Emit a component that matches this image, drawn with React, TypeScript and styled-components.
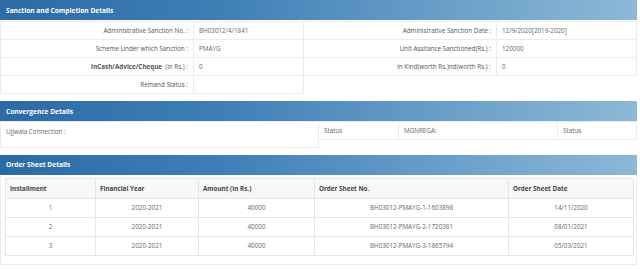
import React from "react";
import styled, { createGlobalStyle } from "styled-components";

const Global = createGlobalStyle`
  html, body { margin: 0; padding: 0; background: #fff; }
  body { font-family: "Open Sans", "Liberation Sans", sans-serif; color: #555; }
`;

const Page = styled.div`
  width: 637px;
  display: flex;
  flex-direction: column;
`;

const Panel = styled.section<{ $gap?: number }>`
  display: flex;
  flex-direction: column;
  margin-bottom: ${(p) => p.$gap ?? 0}px;
`;

const Header = styled.div`
  height: 20px;
  flex: none;
  display: flex;
  align-items: center;
  padding-left: 6px;
  background: linear-gradient(90deg, #2c6aa6 0%, #3f7fb6 35%, #6a9fc9 70%, #8db8d6 100%);
  color: #fff;
  font-size: 6.6px;
  font-weight: 700;
`;

const Grid = styled.table`
  border-collapse: collapse;
  width: 636px;
  table-layout: fixed;
  font-size: 6.3px;
  margin-top: 1px;
`;

const Cell = styled.td<{ $label?: boolean; $bold?: boolean }>`
  height: 17px;
  padding: 0 5px;
  border: 1px solid #ececec;
  text-align: ${(p) => (p.$label ? "right" : "left")};
  color: ${(p) => (p.$label ? "#555" : "#666")};
  font-weight: ${(p) => (p.$bold ? 700 : 400)};
  white-space: nowrap;
  vertical-align: middle;
`;

const Small = styled.span`
  font-weight: 400;
`;

const ConvGrid = styled.table`
  border-collapse: collapse;
  width: 636px;
  table-layout: fixed;
  font-size: 6.3px;
`;

const ConvCell = styled.td<{ $tall?: boolean }>`
  height: 17px;
  padding: 0 5px;
  border: 1px solid #ececec;
  color: #666;
  white-space: nowrap;
  vertical-align: ${(p) => (p.$tall ? "top" : "middle")};
  padding-top: ${(p) => (p.$tall ? "5px" : "0")};
`;

const Empty = styled.td`
  border: none;
  padding: 0;
`;

const OrderBox = styled.div`
  border: 1px solid #eeeeee;
  border-top: none;
  padding: 3px 2px 8px 4px;
`;

const OrderTable = styled.table`
  border-collapse: collapse;
  width: 628px;
  table-layout: fixed;
  font-size: 6.3px;
`;

const Th = styled.th`
  height: 19px;
  padding: 0 4px;
  background: #f7f8f9;
  border: 1px solid #e6e6e6;
  color: #444;
  font-size: 6.3px;
  font-weight: 700;
  text-align: left;
  white-space: nowrap;
`;

const Td = styled.td`
  height: 18px;
  padding: 0;
  border: 1px solid #e6e6e6;
  color: #666;
  text-align: center;
  white-space: nowrap;
`;

const Footer = styled.div`
  margin-top: 5px;
  height: 1px;
  border-top: 1px solid #e4e4e4;
`;

const orders = [
  ["1", "2020-2021", "40000", "BH03012-PMAYG-1-1603898", "14/11/2020"],
  ["2", "2020-2021", "40000", "BH03012-PMAYG-2-1720381", "08/01/2021"],
  ["3", "2020-2021", "40000", "BH03012-PMAYG-3-1865794", "05/03/2021"],
];

export default function App() {
  return (
    <>
      <Global />
      <Page>
        <Panel $gap={7}>
          <Header>Sanction and Completion Details</Header>
          <Grid>
            <colgroup>
              <col style={{ width: 193 }} />
              <col style={{ width: 110 }} />
              <col style={{ width: 193 }} />
              <col style={{ width: 140 }} />
            </colgroup>
            <tbody>
              <tr>
                <Cell $label>Administrative Sanction No. :</Cell>
                <Cell>BH03012/4/1841</Cell>
                <Cell $label>Administrative Sanction Date :</Cell>
                <Cell>12/9/2020[2019-2020]</Cell>
              </tr>
              <tr>
                <Cell $label>Scheme Under which Sanction :</Cell>
                <Cell>PMAYG</Cell>
                <Cell $label>Unit Assitance Sanctioned(Rs.) :</Cell>
                <Cell>120000</Cell>
              </tr>
              <tr>
                <Cell $label $bold>
                  InCash/Advice/Cheque <Small>&nbsp;(in Rs.) :</Small>
                </Cell>
                <Cell>0</Cell>
                <Cell $label>In Kind(worth Rs.)nd(worth Rs.) :</Cell>
                <Cell>0</Cell>
              </tr>
              <tr>
                <Cell $label>Remand Status :</Cell>
                <Cell></Cell>
                <Empty />
                <Empty />
              </tr>
            </tbody>
          </Grid>
        </Panel>

        <Panel $gap={7}>
          <Header>Convergence Details</Header>
          <ConvGrid>
            <colgroup>
              <col style={{ width: 318 }} />
              <col style={{ width: 80 }} />
              <col style={{ width: 159 }} />
              <col style={{ width: 79 }} />
            </colgroup>
            <tbody>
              <tr>
                <ConvCell $tall rowSpan={2}>
                  Ujjwala Connection :
                </ConvCell>
                <ConvCell>Status</ConvCell>
                <ConvCell>MGNREGA:</ConvCell>
                <ConvCell>Status</ConvCell>
              </tr>
              <tr>
                <Empty colSpan={3} style={{ height: 7 }} />
              </tr>
            </tbody>
          </ConvGrid>
        </Panel>

        <Panel>
          <Header>Order Sheet Details</Header>
          <OrderBox>
            <OrderTable>
              <colgroup>
                <col style={{ width: 90 }} />
                <col style={{ width: 103 }} />
                <col style={{ width: 116 }} />
                <col style={{ width: 194 }} />
                <col style={{ width: 125 }} />
              </colgroup>
              <thead>
                <tr>
                  <Th>Installment</Th>
                  <Th>Financial Year</Th>
                  <Th>Amount (In Rs.)</Th>
                  <Th>Order Sheet No.</Th>
                  <Th>Order Sheet Date</Th>
                </tr>
              </thead>
              <tbody>
                {orders.map((r) => (
                  <tr key={r[0]}>
                    {r.map((v, i) => (
                      <Td key={i}>{v}</Td>
                    ))}
                  </tr>
                ))}
              </tbody>
            </OrderTable>
          </OrderBox>
          <Footer />
        </Panel>
      </Page>
    </>
  );
}
